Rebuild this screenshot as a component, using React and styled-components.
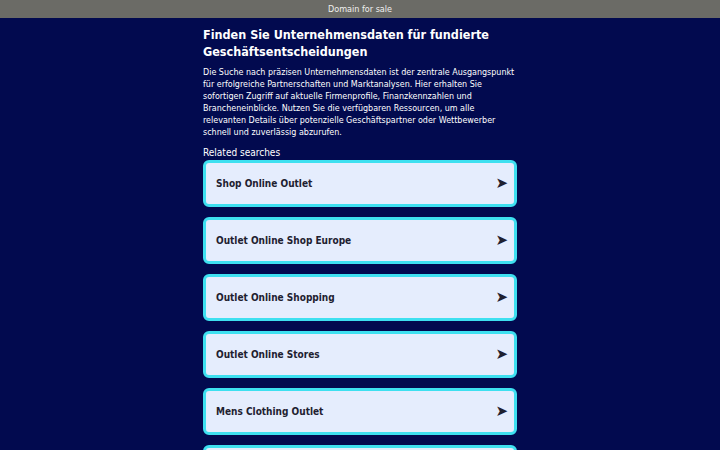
import styled, { createGlobalStyle } from "styled-components";

const GlobalStyle = createGlobalStyle`
  html, body {
    margin: 0;
    padding: 0;
    background: #020a4f;
    font-family: "DejaVu Sans Condensed", "DejaVu Sans", sans-serif;
  }
`;

const searches = [
  "Shop Online Outlet",
  "Outlet Online Shop Europe",
  "Outlet Online Shopping",
  "Outlet Online Stores",
  "Mens Clothing Outlet",
  "Outlet Stores Online",
];

const TopBar = styled.div`
  height: 18px;
  background: #6b6b66;
  color: #f0f0f0;
  font-size: 9px;
  display: flex;
  align-items: center;
  justify-content: center;
`;

const Main = styled.main`
  width: 314px;
  margin: 0 auto;
  padding-top: 8px;
`;

const Title = styled.h1`
  margin: 0 0 7px;
  color: #ffffff;
  font-size: 12.5px;
  line-height: 17px;
  font-weight: bold;
`;

const Intro = styled.p`
  margin: 0 0 7px;
  color: #ffffff;
  font-family: "DejaVu Sans", sans-serif;
  font-size: 8px;
  line-height: 12px;
`;

const Label = styled.div`
  color: #ffffff;
  font-size: 10px;
  line-height: 14px;
`;

const List = styled.div`
  display: flex;
  flex-direction: column;
  gap: 10px;
`;

const Card = styled.a`
  display: flex;
  align-items: center;
  justify-content: space-between;
  height: 47px;
  box-sizing: border-box;
  padding: 0 6px 0 10px;
  background: #e5edfd;
  border: 3px solid #3ee0f0;
  border-radius: 6px;
  color: #1e2130;
  font-size: 10px;
  font-weight: bold;
  text-decoration: none;
`;

const Arrow = styled.span`
  font-family: "DejaVu Sans", sans-serif;
  font-size: 15px;
  line-height: 1;
  color: #1e2130;
`;

export default function App() {
  return (
    <>
      <GlobalStyle />
      <TopBar>Domain for sale</TopBar>
      <Main>
        <Title>Finden Sie Unternehmensdaten für fundierte Geschäftsentscheidungen</Title>
        <Intro>
          Die Suche nach präzisen Unternehmensdaten ist der zentrale Ausgangspunkt
          für erfolgreiche Partnerschaften und Marktanalysen. Hier erhalten Sie
          sofortigen Zugriff auf aktuelle Firmenprofile, Finanzkennzahlen und
          Brancheneinblicke. Nutzen Sie die verfügbaren Ressourcen, um alle
          relevanten Details über potenzielle Geschäftspartner oder Wettbewerber
          schnell und zuverlässig abzurufen.
        </Intro>
        <Label>Related searches</Label>
        <List>
          {searches.map((s) => (
            <Card key={s} href="#">
              {s}
              <Arrow>➤</Arrow>
            </Card>
          ))}
        </List>
      </Main>
    </>
  );
}
